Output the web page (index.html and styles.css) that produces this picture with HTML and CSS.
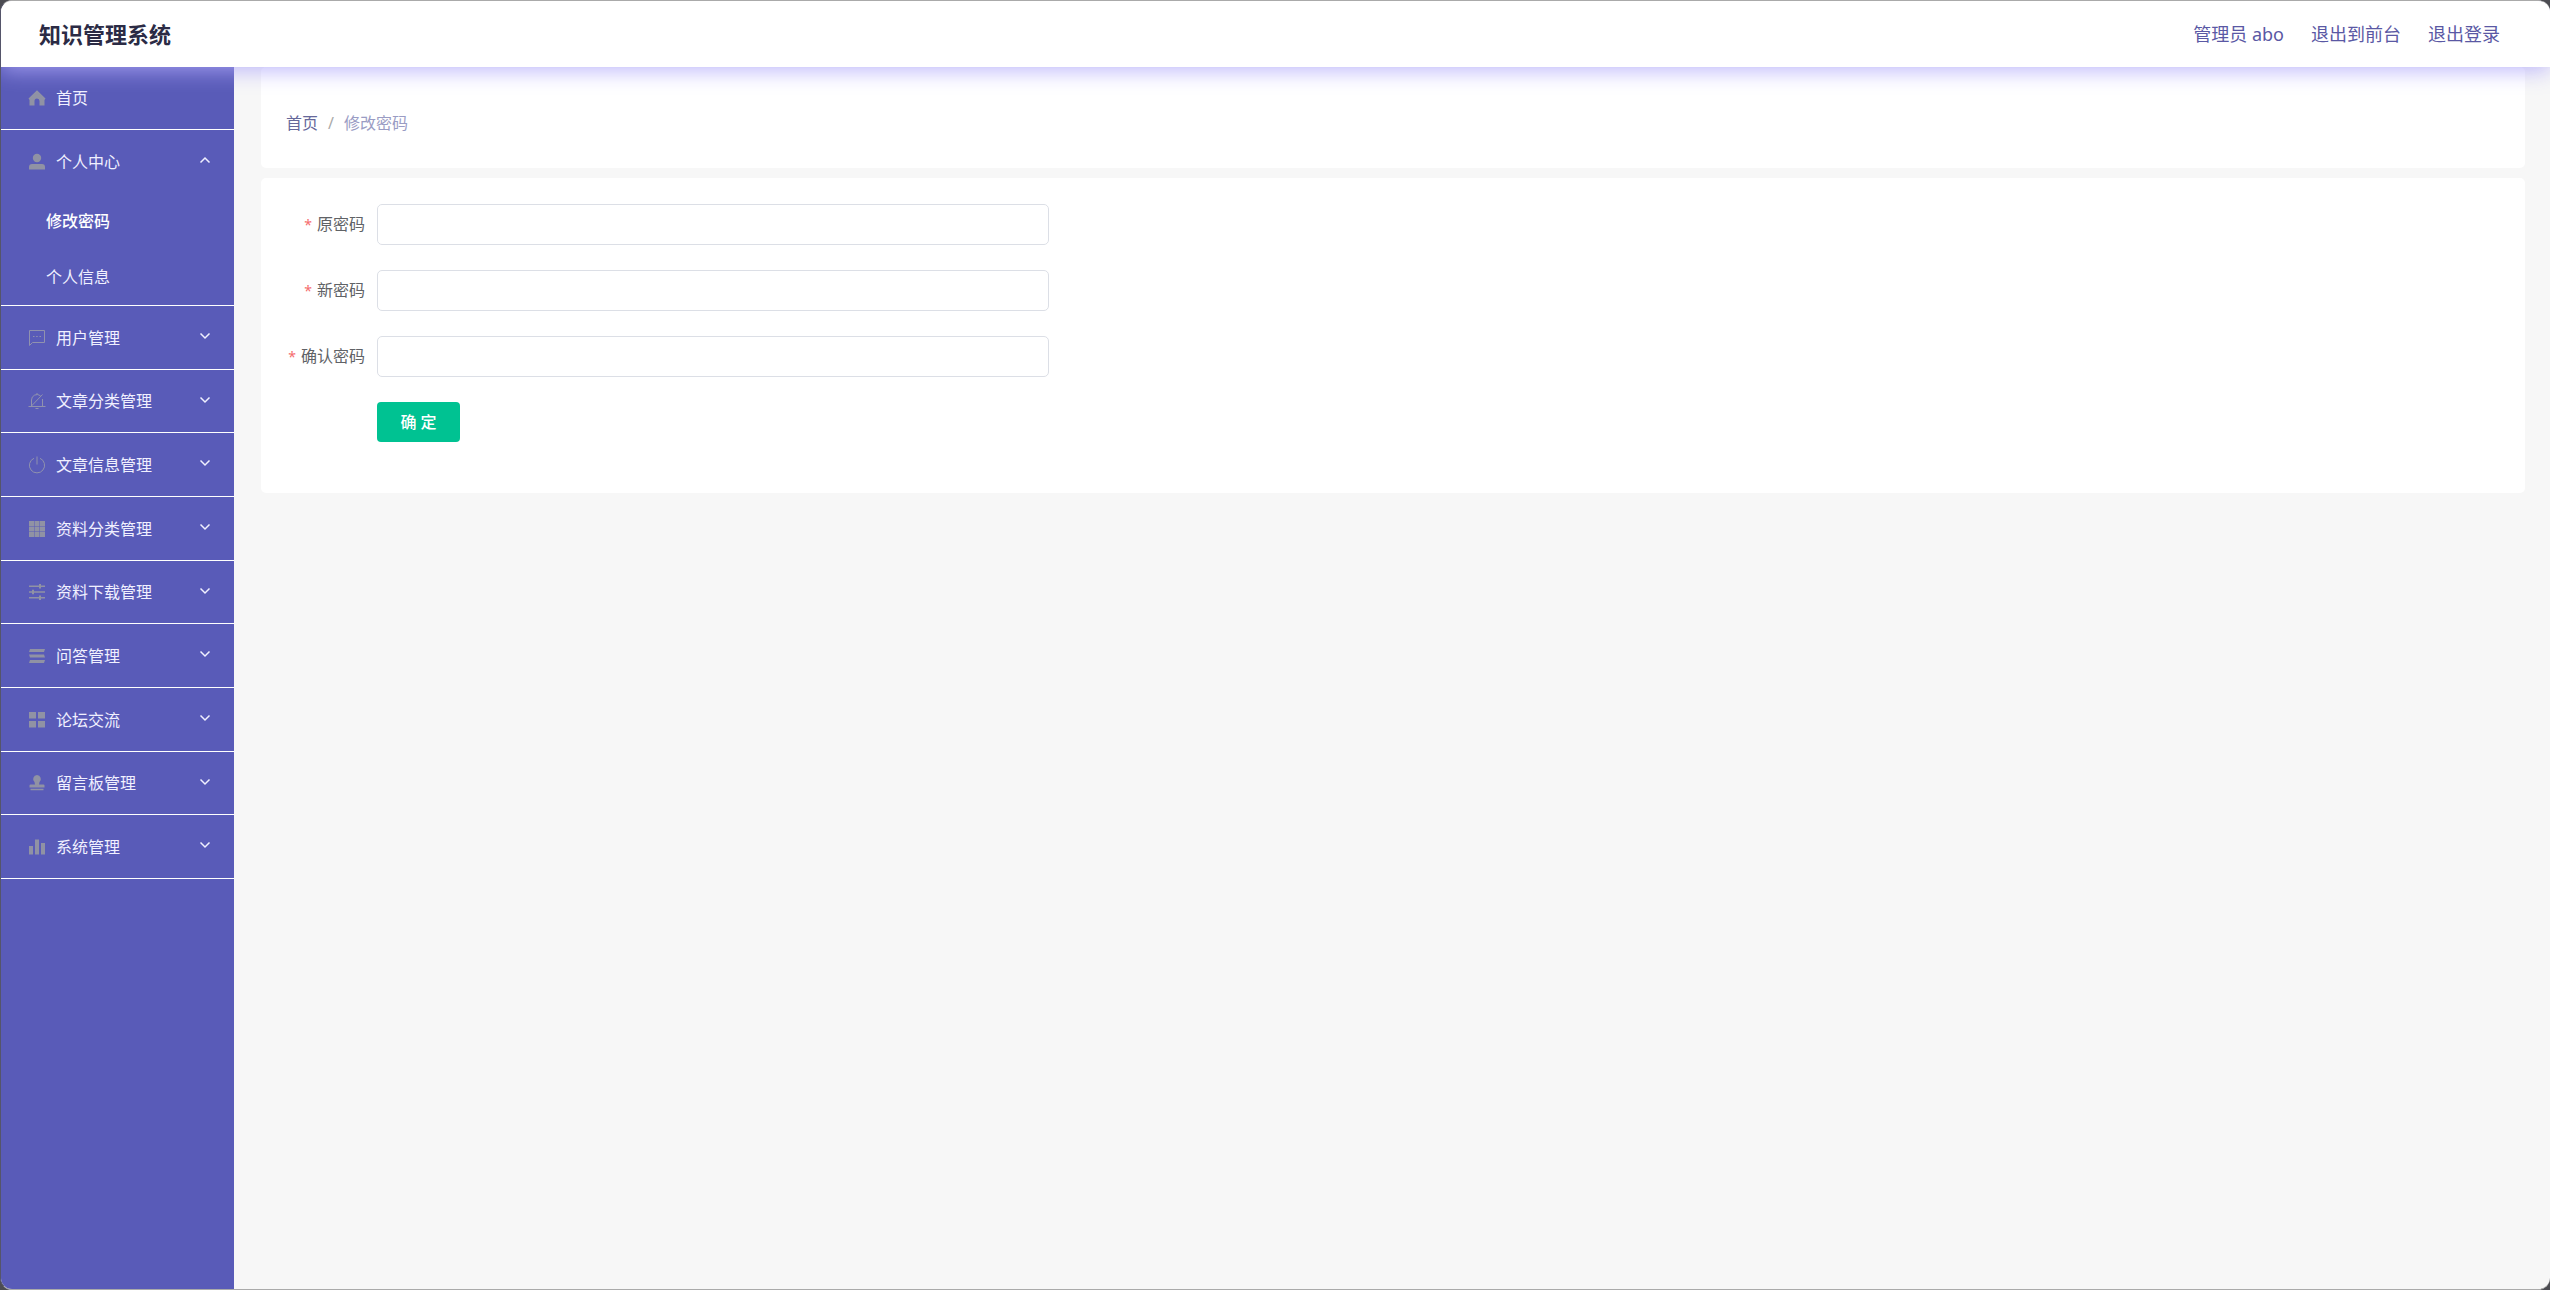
FILE: index.html
```html
<!DOCTYPE html>
<html lang="zh-CN">
<head>
    <meta charset="UTF-8">
    <meta name="viewport" content="width=device-width, initial-scale=1.0">
    <title>知识管理系统</title>
    <link rel="stylesheet" href="styles.css">
</head>
<body>
    <div class="app">
        <header class="header">
            <h1 class="title">知识管理系统</h1>
            <nav class="header-links">
                <span>管理员 abo</span>
                <a href="#">退出到前台</a>
                <a href="#">退出登录</a>
            </nav>
        </header>

        <div class="container">
            <aside class="sidebar">
                <ul class="menu">
                    <li>
                        <a class="menu-row" href="#">
                            <svg class="icon" viewBox="0 0 18 18"><path d="M9 1.200 0.500 9.500 1.500 11V16.500h5V12a2.500 2.500 0 0 1 5 0v4.500h5V11l1-1.500z"/></svg>
                            <span>首页</span>
                        </a>
                    </li>
                    <li>
                        <button class="menu-row" type="button" aria-expanded="true">
                            <svg class="icon" viewBox="0 0 18 18"><circle cx="9" cy="5" r="4.2"/><path d="M1 16.500v-2.500a3 3 0 0 1 3-3h10a3 3 0 0 1 3 3v2.500z"/></svg>
                            <span>个人中心</span>
                            <svg class="arrow" viewBox="0 0 12 12"><path d="M1.500 8.500 6 4l4.500 4.500"/></svg>
                        </button>
                        <ul class="submenu">
                            <li><a class="active" href="#">修改密码</a></li>
                            <li><a href="#">个人信息</a></li>
                        </ul>
                    </li>
                    <li>
                        <button class="menu-row" type="button">
                            <svg class="icon line" viewBox="0 0 18 18"><path d="M1.500 16.500v-15h15v12h-12zM5 7.500h1.500M8.200 7.500h1.500M11.500 7.500H13"/></svg>
                            <span>用户管理</span>
                            <svg class="arrow" viewBox="0 0 12 12"><path d="M1.500 3.500 6 8l4.500-4.500"/></svg>
                        </button>
                    </li>
                    <li>
                        <button class="menu-row" type="button">
                            <svg class="icon line" viewBox="0 0 18 18"><path d="M0.500 14.500h17M3.500 14.500V8a5.500 5.500 0 0 1 9-4.200M14.500 7v7.500M7.500 16.500h3M9 2.500V1M2.500 15 14.500 2.500"/></svg>
                            <span>文章分类管理</span>
                            <svg class="arrow" viewBox="0 0 12 12"><path d="M1.500 3.500 6 8l4.500-4.500"/></svg>
                        </button>
                    </li>
                    <li>
                        <button class="menu-row" type="button">
                            <svg class="icon line" viewBox="0 0 18 18"><path d="M9 0.500v8M6 2.300a7.600 7.600 0 1 0 6 0"/></svg>
                            <span>文章信息管理</span>
                            <svg class="arrow" viewBox="0 0 12 12"><path d="M1.500 3.500 6 8l4.500-4.500"/></svg>
                        </button>
                    </li>
                    <li>
                        <button class="menu-row" type="button">
                            <svg class="icon" viewBox="0 0 18 18"><path d="M1 1h5v5H1zM6.500 1h5v5h-5zM12 1h5v5h-5zM1 6.500h5v5H1zM6.500 6.500h5v5h-5zM12 6.500h5v5h-5zM1 12h5v5H1zM6.500 12h5v5h-5zM12 12h5v5h-5z"/></svg>
                            <span>资料分类管理</span>
                            <svg class="arrow" viewBox="0 0 12 12"><path d="M1.500 3.500 6 8l4.500-4.500"/></svg>
                        </button>
                    </li>
                    <li>
                        <button class="menu-row" type="button">
                            <svg class="icon" viewBox="0 0 18 18"><path d="M1 2.500h10V1h2v1.500h4V4h-4v1.500h-2V4H1zM1 8.200h3V6.700h2v1.500h11v1.500H6v1.500H4V9.700H1zM1 14h10v-1.500h2V14h4v1.500h-4V17h-2v-1.500H1z"/></svg>
                            <span>资料下载管理</span>
                            <svg class="arrow" viewBox="0 0 12 12"><path d="M1.500 3.500 6 8l4.500-4.500"/></svg>
                        </button>
                    </li>
                    <li>
                        <button class="menu-row" type="button">
                            <svg class="icon" viewBox="0 0 18 18"><path d="M2 2h15l-1 3H1zM1 7.500h15l1 3H2zM2 13h15l-1 3H1z"/></svg>
                            <span>问答管理</span>
                            <svg class="arrow" viewBox="0 0 12 12"><path d="M1.500 3.500 6 8l4.500-4.500"/></svg>
                        </button>
                    </li>
                    <li>
                        <button class="menu-row" type="button">
                            <svg class="icon" viewBox="0 0 18 18"><path d="M1 1h7v6.500H1zM10 1h7v6.500h-7zM1 10h7v6.500H1zM10 10h7v6.500h-7z"/></svg>
                            <span>论坛交流</span>
                            <svg class="arrow" viewBox="0 0 12 12"><path d="M1.500 3.500 6 8l4.500-4.500"/></svg>
                        </button>
                    </li>
                    <li>
                        <button class="menu-row" type="button">
                            <svg class="icon" viewBox="0 0 18 18"><path d="M9 1a4 4 0 0 1 2.500 7L11 10.500h4.500a1 1 0 0 1 1 1v2h-15v-2a1 1 0 0 1 1-1H7L6.500 8A4 4 0 0 1 9 1zM2.500 14.700h13v1.500h-13z"/></svg>
                            <span>留言板管理</span>
                            <svg class="arrow" viewBox="0 0 12 12"><path d="M1.500 3.500 6 8l4.500-4.500"/></svg>
                        </button>
                    </li>
                    <li>
                        <button class="menu-row" type="button">
                            <svg class="icon" viewBox="0 0 18 18"><path d="M1 8h4v8.500H1zM7 1.500h4v15H7zM13 5h4v11.500h-4z"/></svg>
                            <span>系统管理</span>
                            <svg class="arrow" viewBox="0 0 12 12"><path d="M1.500 3.500 6 8l4.500-4.500"/></svg>
                        </button>
                    </li>
                </ul>
            </aside>

            <main class="main">
                <nav class="card breadcrumb">
                    <a href="#">首页</a>
                    <span class="separator">/</span>
                    <span class="current">修改密码</span>
                </nav>

                <form class="card form">
                    <div class="form-item">
                        <label for="old-password">原密码</label>
                        <input type="password" id="old-password" required>
                    </div>
                    <div class="form-item">
                        <label for="new-password">新密码</label>
                        <input type="password" id="new-password" required>
                    </div>
                    <div class="form-item">
                        <label for="confirm-password">确认密码</label>
                        <input type="password" id="confirm-password" required>
                    </div>
                    <button class="submit" type="submit">确 定</button>
                </form>
            </main>
        </div>
    </div>
</body>
</html>
```
FILE: styles.css
```css
* {
    box-sizing: border-box;
}
body {
    margin: 0;
    background: #4c4c52;
    font-family: "Noto Sans", "Noto Sans CJK SC", sans-serif;
    font-size: 16px;
    line-height: 24px;
}
a {
    color: inherit;
    text-decoration: none;
}
ul {
    list-style: none;
    margin: 0;
    padding: 0;
}
.app {
    display: flex;
    flex-direction: column;
    min-height: 100vh;
    border: 1px solid #aaa;
    border-left-color: #55556a;
    border-right: 0;
    border-radius: 12px;
    overflow: hidden;
    background: #f7f7f7;
}

/* header */
.header {
    position: relative;
    z-index: 1;
    display: flex;
    align-items: center;
    justify-content: space-between;
    height: 66px;
    padding: 0 50px 0 38px;
    background: #fff;
    box-shadow: 0 4px 20px rgba(175, 167, 250, 0.8);
}
.title {
    margin: 0;
    font-size: 22px;
    font-weight: bold;
    color: #2b2b45;
}
.header-links {
    display: flex;
    gap: 27px;
    font-size: 18px;
    color: #5a58a4;
}
.container {
    display: flex;
    flex: 1;
}

/* sidebar */
.sidebar {
    width: 233px;
    background: #595bb8;
    color: #fff;
}
.menu > li {
    border-bottom: 1px solid #fff;
}
.menu-row {
    display: flex;
    align-items: center;
    width: 100%;
    height: 63px;
    padding: 0 23px 0 27px;
    border: 0;
    background: none;
    color: #f0f0ff;
    font: inherit;
    text-align: left;
    cursor: pointer;
}
/* rows average a little under 64px */
.menu > li:nth-child(3n + 1) .menu-row {
    height: 62px;
}
.icon {
    width: 18px;
    height: 18px;
    margin-right: 10px;
    fill: #9092a4;
}
.icon.line {
    fill: none;
    stroke: #9092ae;
    stroke-width: 1;
}
.arrow {
    width: 12px;
    height: 12px;
    margin-left: auto;
    margin-bottom: 3px;
    fill: none;
    stroke: #f0f0ff;
    stroke-width: 1.5;
}
.submenu a {
    display: block;
    padding-left: 45px;
    line-height: 56px;
    color: #f0f0ff;
}
.submenu .active {
    color: #fff;
    font-weight: 500;
}

/* content */
.main {
    flex: 1;
    padding: 0 25px 0 27px;
}
.card {
    background: #fff;
    border-radius: 5px;
}
.breadcrumb {
    display: flex;
    gap: 10px;
    margin-bottom: 10px;
    padding: 44px 25px 33px;
    color: #66689a;
}
.separator {
    color: #aaa;
}
.current {
    color: #9a9cc4;
}
.form {
    padding: 26px 25px 51px;
}
.form-item {
    display: flex;
    align-items: center;
    margin-bottom: 25px;
}
.form-item label {
    width: 91px;
    padding-right: 12px;
    text-align: right;
    color: #606266;
}
.form-item label::before {
    content: "*";
    margin-right: 5px;
    font-size: 14px;
    color: #f56c6c;
}
.form-item input {
    flex: 1;
    max-width: 672px;
    height: 41px;
    padding: 0 18px;
    border: 1px solid #dcdfe6;
    border-radius: 5px;
    background: #fff;
    font: inherit;
}
.submit {
    width: 83px;
    height: 40px;
    margin-left: 91px;
    padding: 0;
    border: 0;
    border-radius: 4px;
    background: #00c292;
    color: #fff;
    font: inherit;
    font-weight: 500;
    cursor: pointer;
}
```
